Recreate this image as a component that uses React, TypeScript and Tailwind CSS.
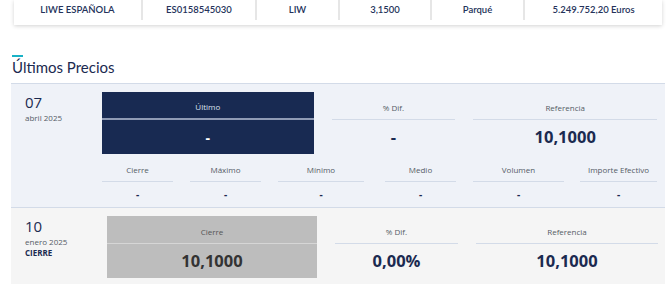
const TOP = [
  { v: "LIWE ESPAÑOLA", w: "w-[129px]" },
  { v: "ES0158545030", w: "w-[114px]" },
  { v: "LIW", w: "w-[83px]" },
  { v: "3,1500", w: "w-[92px]" },
  { v: "Parqué", w: "w-[93px]" },
  { v: "5.249.752,20 Euros", w: "flex-1" },
];

const SUB = [
  { l: "Cierre", w: "w-[71px]" },
  { l: "Máximo", w: "w-[71px] ml-[17px]" },
  { l: "Mínimo", w: "w-[86px] ml-[17px]" },
  { l: "Medio", w: "w-[71px] ml-[21px]" },
  { l: "Volumen", w: "w-[91px] ml-[17px]" },
  { l: "Importe Efectivo", w: "w-[77px] ml-[16px]" },
];

function Cell({ label, value, w, big = true }: { label: string; value: string; w: string; big?: boolean }) {
  return (
    <div className={`${w} flex flex-col`}>
      <div className="h-[28px] pb-[6px] flex items-end justify-center text-[8px] leading-[10px] text-[#555c66] border-b border-[#d3dbe8]">
        {label}
      </div>
      <div
        className={`flex items-center justify-center font-bold text-[#1b2a50] ${
          big ? "h-[34px] text-[16.5px]" : "h-[25px] text-[10px]"
        }`}
      >
        {value}
      </div>
    </div>
  );
}

export default function App() {
  return (
    <div className="w-[670px] h-[284px] bg-white overflow-hidden relative" style={{ fontFamily: "'Open Sans', sans-serif" }}>
      {/* top summary card */}
      <div className="ml-[14px] w-[648px] h-[25px] bg-white shadow-[0_1px_4px_rgba(0,0,0,0.18)] flex" style={{ fontFamily: "Lato, sans-serif" }}>
        {TOP.map((c, i) => (
          <div
            key={c.v}
            className={`${c.w} h-[20px] flex items-center justify-center text-[9.5px] font-semibold text-[#24325a] ${
              i < TOP.length - 1 ? "border-r-2 border-[#e6e6e6]" : ""
            }`}
          >
            {c.v}
          </div>
        ))}
      </div>

      {/* heading */}
      <div className="ml-[12px] mt-[30px]">
        <div className="w-[11px] h-[2px] bg-[#19b2c6]" />
        <h2 className="mt-[2px] text-[15px] leading-[16px] text-[#1b2a50]" style={{ fontFamily: "Lato, sans-serif" }}>
          Últimos Precios
        </h2>
      </div>

      {/* panel 1 */}
      <div className="ml-[11px] mt-[8px] w-[654px] bg-[#eff2f8] border-t border-b border-[#d3dbe8] pt-[8px] flex">
        <div className="w-[91px] pl-[14px] text-[#1b2a50]">
          <div className="text-[15px] leading-[16px] mt-[2px]">07</div>
          <div className="text-[8px] leading-[10px] mt-[3px] text-[#555c66]">abril 2025</div>
        </div>
        <div className="w-[555px] flex flex-col">
          <div className="flex gap-[18px]">
            <div className="w-[212px] h-[62px] bg-[#182a52] flex flex-col">
              <div className="h-[28px] pb-[6px] flex items-end justify-center text-[8px] leading-[10px] text-[#dbe1ee] border-b-2 border-[#8f9bb5]">
                Último
              </div>
              <div className="flex-1 flex items-center justify-center text-white font-bold text-[14px]">-</div>
            </div>
            <Cell label="% Dif." value="-" w="w-[124px]" />
            <Cell label="Referencia" value="10,1000" w="w-[184px]" />
          </div>
          <div className="flex">
            {SUB.map((s) => (
              <Cell key={s.l} label={s.l} value="-" w={s.w} big={false} />
            ))}
          </div>
        </div>
      </div>

      {/* panel 2 */}
      <div className="ml-[11px] w-[654px] h-[80px] bg-[#f5f5f5] pt-[8px] flex">
        <div className="w-[96px] pl-[14px] text-[#1b2a50]">
          <div className="text-[15px] leading-[16px] mt-[2px]">10</div>
          <div className="text-[8px] leading-[10px] mt-[3px] text-[#555c66]">enero 2025</div>
          <div className="text-[8px] leading-[10px] font-bold mt-[1px]">CIERRE</div>
        </div>
        <div className="flex gap-[18px]">
          <div className="w-[210px] h-[62px] bg-[#bdbdbd] flex flex-col">
            <div className="h-[28px] pb-[6px] flex items-end justify-center text-[8px] leading-[10px] text-[#555] border-b border-[#d6d6d6]">
              Cierre
            </div>
            <div className="flex-1 flex items-center justify-center text-[#333] font-bold text-[16.5px]">10,1000</div>
          </div>
          <Cell label="% Dif." value="0,00%" w="w-[123px]" />
          <Cell label="Referencia" value="10,1000" w="w-[182px]" />
        </div>
      </div>
    </div>
  );
}
